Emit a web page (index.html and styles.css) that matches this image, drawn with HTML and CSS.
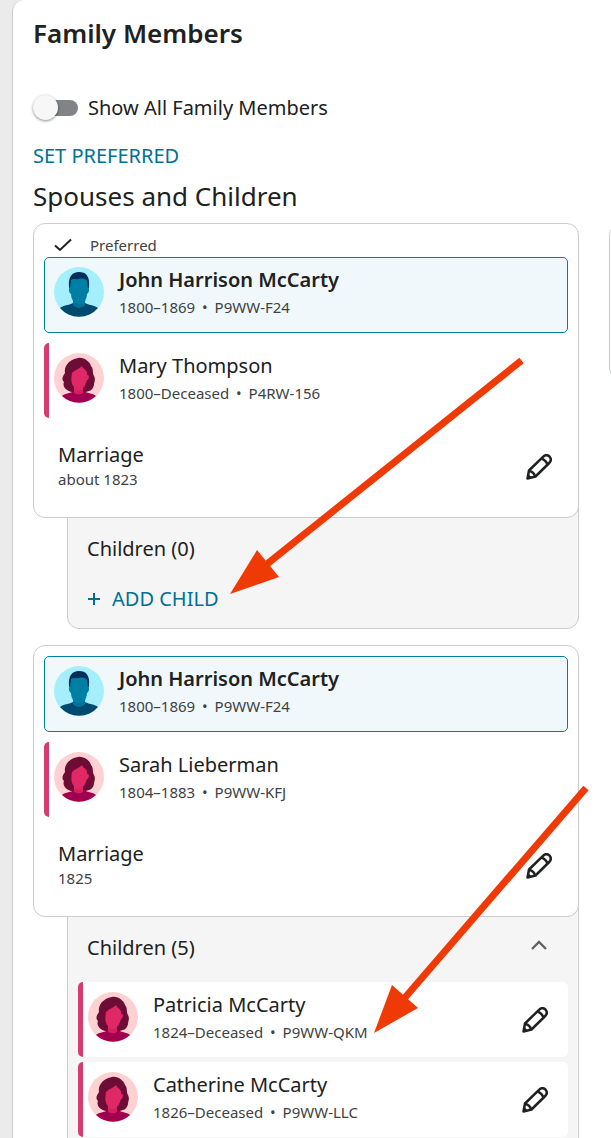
FILE: index.html
```html
<!DOCTYPE html>
<html lang="en">
<head>
<meta charset="utf-8">
<meta name="viewport" content="width=device-width, initial-scale=1">
<title>Family Members</title>
<link rel="stylesheet" href="styles.css">
</head>
<body>
<svg class="defs" aria-hidden="true">
  <symbol id="man" viewBox="0 0 50 50">
    <circle cx="25" cy="25" r="25" fill="#a5eefb"/>
    <path d="M6 41C9 38 18 38 20 35H30C32 38 41 38 44 41A25 25 0 0 1 6 41Z" fill="#004a70"/>
    <path d="M15 20C14 10 18 5 25 5C32 5 36 9 35 20L34 23H16Z" fill="#002f5a"/>
    <path d="M17 13C20 11 22 13 25 12C29 11 32 12 33 14L34 21C36 21 35 26 33 27C33 31 31 33 31 35V38C27 42 22 41 19 38V34C18 32 17 30 17 27C15 26 14 21 16 21Z" fill="#007fa5"/>
    <path d="M19 35C22 37 28 37 31 35V38C27 42 22 40 19 38Z" fill="#00719a"/>
  </symbol>
  <symbol id="woman" viewBox="0 0 50 50">
    <circle cx="25" cy="25" r="25" fill="#ffd1d3"/>
    <path d="M24 5C30 4 36 9 37 13C40 16 38 20 40 23C42 27 40 29 40 32C39 37 35 39 30 39H18C12 38 8 33 10 29C7 26 9 23 11 20C10 15 13 7 24 5Z" fill="#6d0d35"/>
    <path d="M8 43C11 40 18 40 20 38H30C32 40 39 40 42 43A25 25 0 0 1 8 43Z" fill="#a10050"/>
    <path d="M18 20C21 17 25 16 28 13C29 16 33 17 33 20V22C36 21 35 27 33 27C32 31 30 34 29 35V39C28 42 22 42 20 39V34C17 31 17 26 18 20Z" fill="#e02866"/>
    <path d="M21 36C24 38 27 38 29 35V39C28 42 22 42 20 39Z" fill="#d41e60"/>
  </symbol>
  <symbol id="pencil" viewBox="0 0 26 26">
    <g fill="none" stroke="#202121" stroke-width="2.5" stroke-linejoin="round">
      <path d="M1.5 24.5L3 16.5L17 2.8C19 .8 21.5 .8 23.5 2.5C25.2 4.5 25.2 7 23.2 9L9.5 22.5Z"/>
      <path d="M15.2 4.5C18 5 21 8 21.5 10.7M3.2 17C6 17.5 8.5 20 9 22.5"/>
    </g>
    <path d="M1 25L2.3 20L6 23.7Z" fill="#202121"/>
  </symbol>
</svg>
<main class="panel">
  <h1 class="title">Family Members</h1>
  <label class="switch"><input class="switch-input" type="checkbox" role="switch"><span>Show All Family Members</span></label>
  <button class="link-button" type="button">SET PREFERRED</button>
  <h2 class="subtitle">Spouses and Children</h2>
  <div class="columns">
    <div class="families">
      <section class="family">
        <div class="card">
          <div class="preferred"><svg class="check" viewBox="0 0 18 14"><path d="M1 7.5L6 12L17 1.5" fill="none" stroke="#202121" stroke-width="2"/></svg><span>Preferred</span></div>
          <div class="couple">
            <div class="person selected"><svg class="avatar"><use href="#man"/></svg><div class="info"><strong class="name">John Harrison McCarty</strong><span class="detail">1800–1869 <span class="dot">•</span> P9WW-F24</span></div></div>
            <div class="person female"><svg class="avatar"><use href="#woman"/></svg><div class="info"><span class="name">Mary Thompson</span><span class="detail">1800–Deceased <span class="dot">•</span> P4RW-156</span></div></div>
          </div>
          <div class="event"><div class="info"><span class="name">Marriage</span><span class="event-date">about 1823</span></div><button class="edit" type="button" aria-label="Edit marriage"><svg class="pencil"><use href="#pencil"/></svg></button></div>
        </div>
        <div class="children">
          <div class="children-head"><h3 class="children-title">Children (0)</h3></div>
          <button class="add-child" type="button"><svg class="plus" viewBox="0 0 12 12"><path d="M6 0V12M0 6H12" stroke="#007096" stroke-width="2"/></svg><span>ADD CHILD</span></button>
        </div>
      </section>
      <section class="family">
        <div class="card spaced">
          <div class="couple">
            <div class="person selected"><svg class="avatar"><use href="#man"/></svg><div class="info"><strong class="name">John Harrison McCarty</strong><span class="detail">1800–1869 <span class="dot">•</span> P9WW-F24</span></div></div>
            <div class="person female"><svg class="avatar"><use href="#woman"/></svg><div class="info"><span class="name">Sarah Lieberman</span><span class="detail">1804–1883 <span class="dot">•</span> P9WW-KFJ</span></div></div>
          </div>
          <div class="event"><div class="info"><span class="name">Marriage</span><span class="event-date">1825</span></div><button class="edit" type="button" aria-label="Edit marriage"><svg class="pencil"><use href="#pencil"/></svg></button></div>
        </div>
        <div class="children open">
          <div class="children-head"><h3 class="children-title">Children (5)</h3><button class="toggle" type="button" aria-label="Collapse children"><svg class="chevron" viewBox="0 0 16 10"><path d="M1 9L8 2L15 9" fill="none" stroke="#616366" stroke-width="2.4"/></svg></button></div>
          <div class="child-list">
            <div class="person female"><svg class="avatar"><use href="#woman"/></svg><div class="info"><span class="name">Patricia McCarty</span><span class="detail">1824–Deceased <span class="dot">•</span> P9WW-QKM</span></div><button class="edit" type="button" aria-label="Edit Patricia McCarty"><svg class="pencil"><use href="#pencil"/></svg></button></div>
            <div class="person female"><svg class="avatar"><use href="#woman"/></svg><div class="info"><span class="name">Catherine McCarty</span><span class="detail">1826–Deceased <span class="dot">•</span> P9WW-LLC</span></div><button class="edit" type="button" aria-label="Edit Catherine McCarty"><svg class="pencil"><use href="#pencil"/></svg></button></div>
          </div>
        </div>
      </section>
    </div>
    <div class="next"><div class="next-card"></div></div>
  </div>
</main>
<svg class="arrows" width="611" height="1138" viewBox="0 0 611 1138" aria-hidden="true">
  <g fill="#f03a05" stroke="#f03a05">
    <path d="M521.5 360.5L262 568" stroke-width="7"/>
    <path d="M230 594L257 550L279 577Z" stroke="none"/>
    <path d="M586 788L402 1001" stroke-width="7"/>
    <path d="M374 1033L392 985L418 1008Z" stroke="none"/>
  </g>
</svg>
</body>
</html>
```
FILE: styles.css
```css
* { box-sizing: border-box; }
body {
  position: relative;
  margin: 0;
  min-height: 100vh;
  padding-left: 12px;
  overflow-x: hidden;
  background: #ebebeb;
  color: #202121;
  font-family: "Noto Sans", sans-serif;
  font-size: 20px;
  line-height: 27px;
}
button { padding: 0; border: 0; background: none; color: inherit; font: inherit; cursor: pointer; }
.defs { position: absolute; width: 0; height: 0; }
.panel {
  display: flex;
  flex-direction: column;
  align-items: flex-start;
  min-height: 100vh;
  padding: 15px 0 0 20px;
  border-left: 1px solid #cbcccd;
  border-top-left-radius: 12px;
  background: #fff;
}
.title, .subtitle { margin: 0; font-size: 26px; line-height: 36px; }
.title { font-weight: 600; }
.subtitle { margin-top: 9px; font-weight: 400; }
.switch { display: flex; align-items: center; gap: 10px; margin-top: 43px; }
.switch-input {
  appearance: none;
  display: flex;
  align-items: center;
  width: 45px;
  height: 16px;
  margin: 0;
  border-radius: 8px;
  background: linear-gradient(90deg, transparent 12px, #808487 12px);
}
.switch-input::before {
  content: "";
  width: 25px;
  height: 25px;
  flex: none;
  border-radius: 50%;
  background: #f7f7f7;
  box-shadow: 0 1px 3px rgba(0, 0, 0, .45);
}
.switch-input:checked { justify-content: flex-end; }
.link-button { margin-top: 21px; color: #007096; }
.columns { display: flex; align-items: flex-start; gap: 30px; width: 100%; margin-top: 9px; }
.families { display: flex; flex: 1; flex-direction: column; gap: 16px; min-width: 0; }
.next { width: 2px; overflow: hidden; }
.next-card { width: 100px; height: 157px; border: 1px solid #cbcccd; border-radius: 12px; }
.card {
  position: relative;
  z-index: 1;
  padding: 0 10px 22px;
  border: 1px solid #cbcccd;
  border-radius: 12px;
  background: #fff;
}
.spaced { padding-top: 10px; }
.preferred { display: flex; align-items: center; gap: 18px; height: 33px; padding: 9px 0 0 10px; color: #404243; font-size: 15px; line-height: 24px; }
.check { width: 18px; height: 14px; }
.couple { display: flex; flex-direction: column; gap: 10px; }
.person { display: flex; align-items: flex-start; gap: 15px; min-height: 75px; padding: 10px; border-radius: 5px; background: #fff; }
.selected { min-height: 76px; padding: 9px; border: 1px solid #007fa5; background: #f0f8fc; }
.female { padding-left: 5px; border-left: 5px solid #d63d6e; }
.avatar { width: 50px; height: 50px; flex: none; }
.info { display: flex; flex: 1; flex-direction: column; min-width: 0; }
.name { font-weight: 400; line-height: 26px; }
strong.name { font-weight: 600; }
.detail, .event-date { color: #404243; font-size: 15px; }
.detail { line-height: 28px; }
.dot { margin: 0 3px; }
.event-date { line-height: 23px; }
.event { display: flex; align-items: center; padding: 24px 16px 4px 14px; }
.edit { display: flex; }
.pencil { width: 26px; height: 26px; }
.children { margin: -12px 0 0 34px; padding: 28px 10px 16px; border: 1px solid #cbcccd; border-radius: 0 0 12px 12px; background: #f5f5f5; }
.children-head { display: flex; align-items: center; justify-content: space-between; padding: 0 21px 0 9px; }
.children-title { margin: 0; font-size: 20px; font-weight: 400; }
.add-child { display: flex; align-items: center; gap: 12px; margin: 23px 0 0 10px; color: #007096; }
.plus { width: 12px; height: 12px; }
.open { padding-bottom: 2px; border-bottom: 0; border-radius: 0; }
.toggle { display: flex; padding-bottom: 6px; }
.chevron { width: 16px; height: 10px; }
.child-list { display: flex; flex-direction: column; gap: 5px; margin-top: 21px; }
.child-list .edit { align-self: center; margin-right: 10px; }
.arrows { position: absolute; top: 0; left: 0; z-index: 2; pointer-events: none; }
```
